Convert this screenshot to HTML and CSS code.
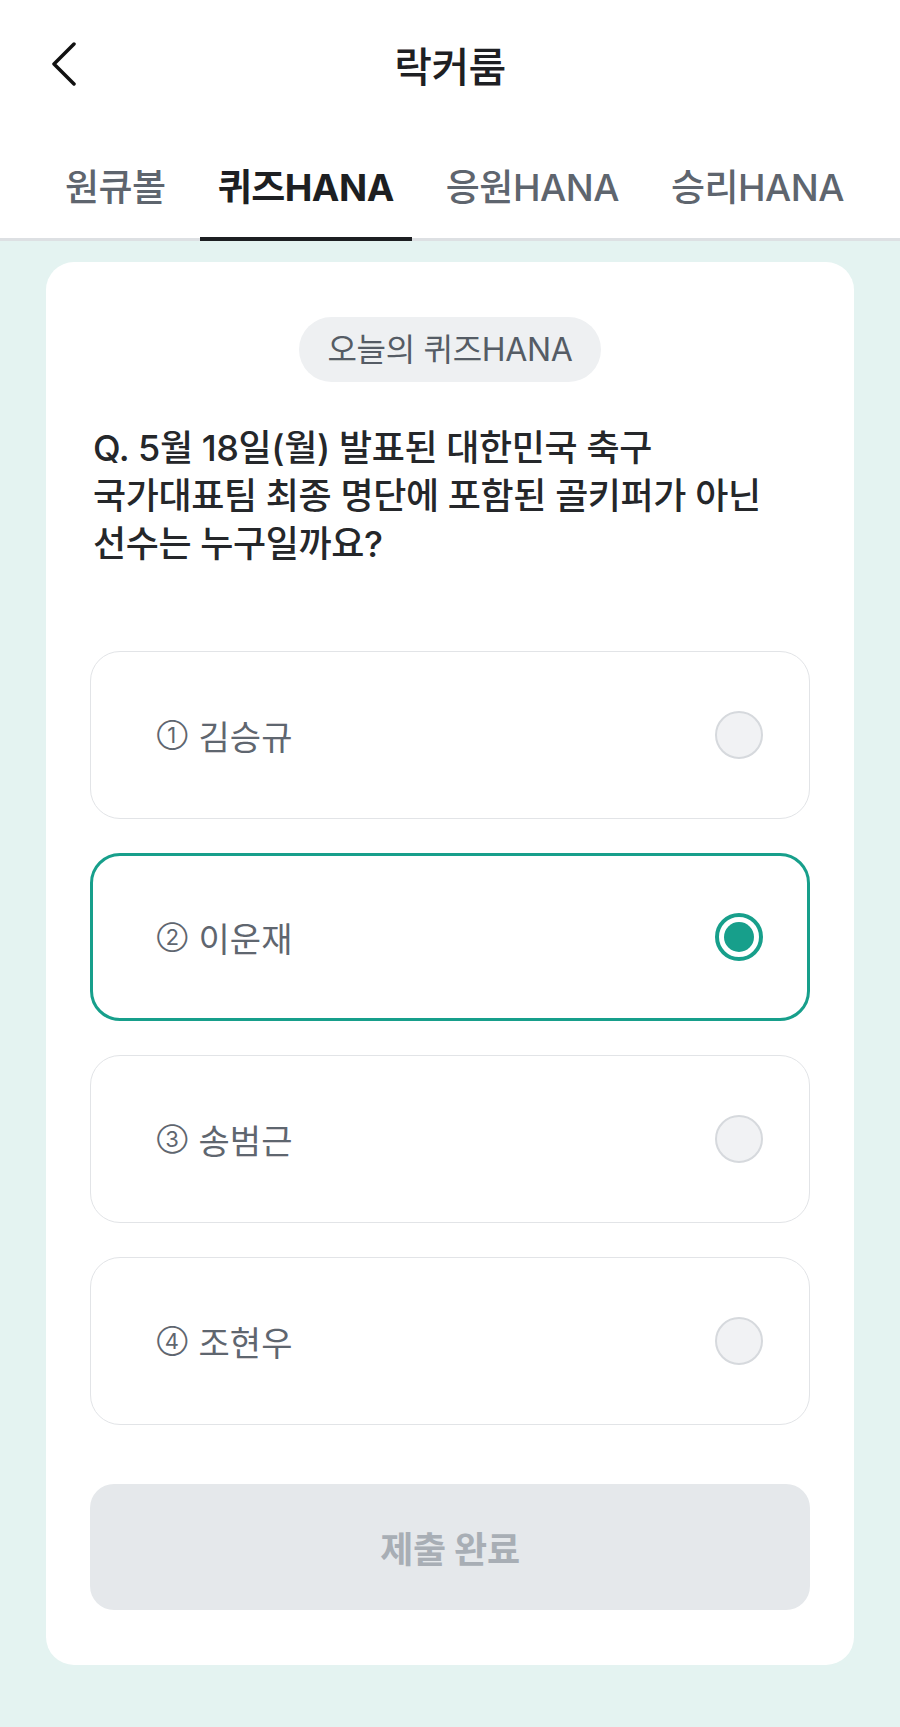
FILE: index.html
```html
<!doctype html>
<html>
	<head>
		<meta http-equiv="Content-Type" content="text/html;charset=UTF-8"/>
		<title>락커룸</title>
		<link rel="stylesheet" href="styles.css">
	</head>
<body>
	<div class="page">
		<!--상단 바-->
		<header class="topbar">
			<a href="javascript:;" class="back">
				<svg width="26" height="44" viewBox="0 0 26 44"><path d="M23 2 L3 22 L23 42" fill="none" stroke="#111" stroke-width="3.5" stroke-linecap="round" stroke-linejoin="round"/></svg>
			</a>
			<h1 class="title">락커룸</h1>
		</header>

		<!--탭-->
		<nav class="tabs">
			<a href="javascript:;" class="tab">원큐볼</a>
			<a href="javascript:;" class="tab on">퀴즈HANA</a>
			<a href="javascript:;" class="tab">응원HANA</a>
			<a href="javascript:;" class="tab">승리HANA</a>
		</nav>

		<main class="content">
			<section class="card">
				<div class="badge">오늘의 퀴즈HANA</div>
				<p class="question">Q. 5월 18일(월) 발표된 대한민국 축구<br>국가대표팀 최종 명단에 포함된 골키퍼가 아닌<br>선수는 누구일까요?</p>

				<ul class="options">
					<li class="option"><span class="label"><i>①</i>김승규</span><span class="radio"></span></li>
					<li class="option on"><span class="label"><i>②</i>이운재</span><span class="radio"></span></li>
					<li class="option"><span class="label"><i>③</i>송범근</span><span class="radio"></span></li>
					<li class="option"><span class="label"><i>④</i>조현우</span><span class="radio"></span></li>
				</ul>

				<button class="submit" disabled>제출 완료</button>
			</section>
		</main>
	</div>
</body>
</html>
```

FILE: styles.css
```css
*{margin:0;padding:0;box-sizing:border-box;text-decoration:none;list-style:none;}
body{background:#fff;font-family:"Inter","Noto Sans CJK KR",sans-serif;color:#222;}

/*상단 바*/
.topbar{display:grid;grid-template-columns:1fr auto 1fr;align-items:center;height:128px;}
.back{display:flex;margin-left:51px;}
.title{font-size:41px;font-weight:500;color:#1e2023;letter-spacing:-0.5px;}

/*탭*/
.tabs{display:flex;gap:16px;padding-left:47px;box-shadow:inset 0 -3px 0 #dde0e3;}
.tab{padding:40px 18px 29px;line-height:40px;font-size:37px;font-weight:500;color:#5e656e;border-bottom:4px solid transparent;letter-spacing:-0.5px;white-space:nowrap;}
.tab.on{font-weight:700;color:#1d1f22;border-bottom-color:#1d1f22;}

/*본문*/
.content{background:#e4f3f1;padding:21px 46px 64px;}
.card{background:#fff;border-radius:28px;padding:55px 44px;display:flex;flex-direction:column;}
.badge{align-self:center;height:65px;line-height:65px;padding:0 28px;border-radius:33px;background:#eef0f2;color:#555c65;font-size:32px;letter-spacing:-0.3px;}
.question{margin-top:42px;padding-left:3px;font-size:36px;line-height:48px;font-weight:500;color:#25272a;letter-spacing:-0.4px;}

.options{margin-top:83px;display:flex;flex-direction:column;gap:34px;}
.option{height:168px;display:flex;align-items:center;justify-content:space-between;padding:0 46px 0 66px;border:1.5px solid #e2e4e7;border-radius:30px;}
.option.on{border:3px solid #179f8b;padding:0 44px 0 64px;}
.label{display:flex;align-items:center;gap:11px;font-size:34px;color:#5f666f;}
.label i{font-style:normal;font-size:22px;}
.radio{width:48px;height:48px;border-radius:50%;background:#f1f2f4;border:2px solid #d6d9dd;display:flex;align-items:center;justify-content:center;}
.option.on .radio{background:#fff;border:4px solid #179f8b;}
.option.on .radio:after{content:"";width:30px;height:30px;border-radius:50%;background:#179f8b;}

.submit{margin-top:59px;height:126px;border:none;border-radius:24px;background:#e5e8eb;color:#a8aeb5;font-family:inherit;font-size:36px;font-weight:700;letter-spacing:-0.3px;}
```
